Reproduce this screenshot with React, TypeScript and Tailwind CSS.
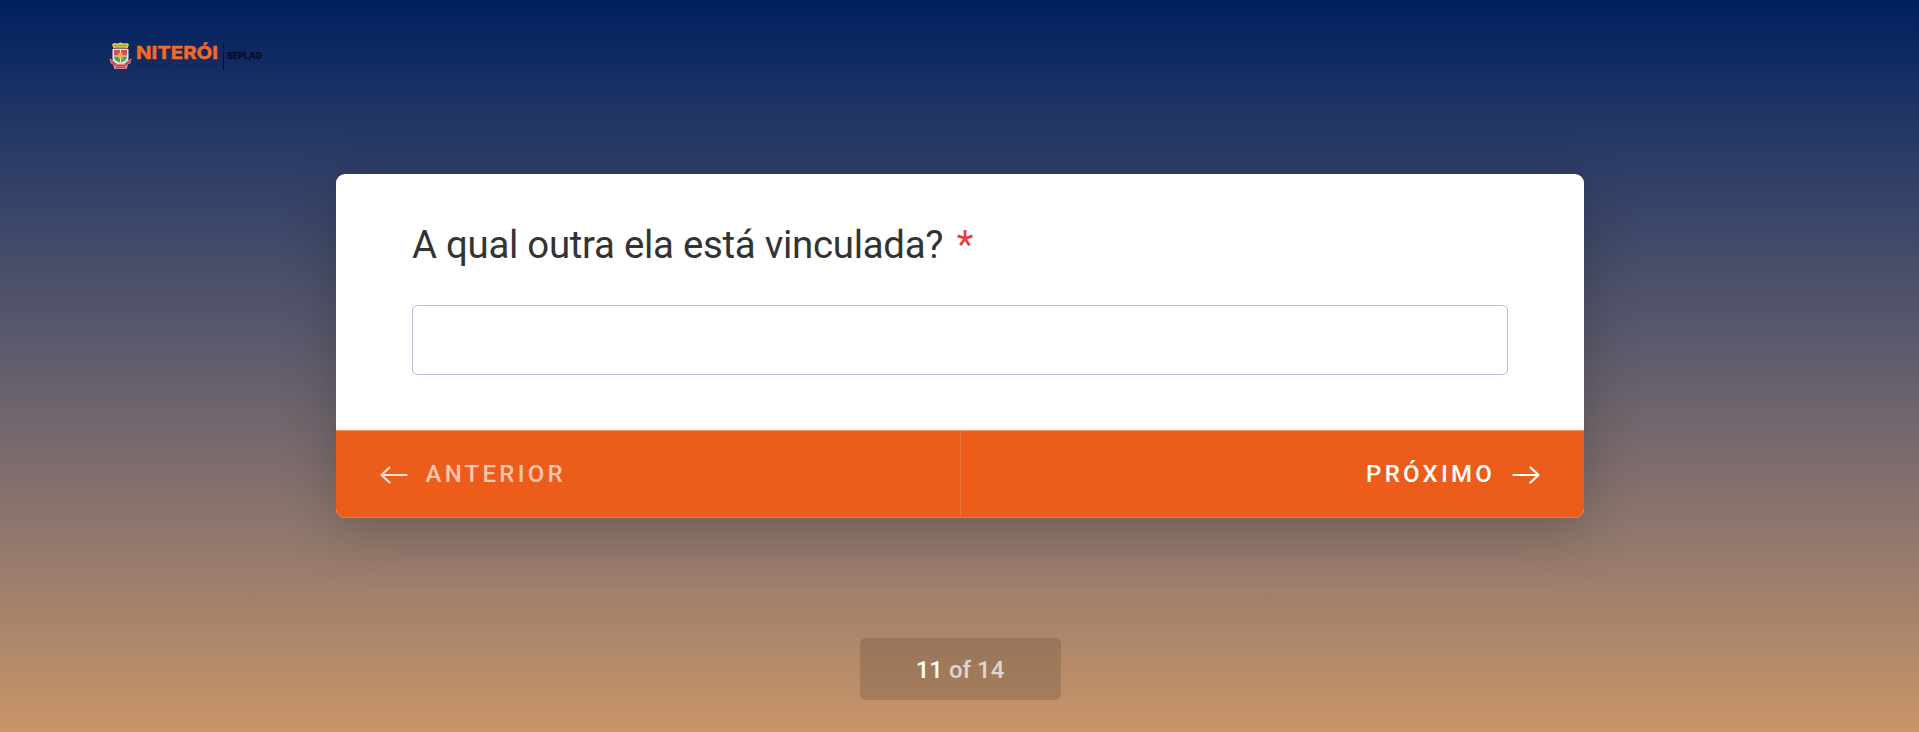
import React from "react";

function Crest() {
  return (
    <svg width="23" height="28" viewBox="0 0 23 28" className="shrink-0">
      <path d="M3 2.500L5 1L8 1.600L11.500 .5L15 1.600L18 1L20 2.500L18.500 6.500H4.500Z" fill="#e0c95f" />
      <path d="M4.500 3.500h14M6 5.300h11" stroke="#8d7830" strokeWidth=".7" />
      <path d="M3.500 7H19.500V16C19.500 20 15.500 22 11.500 23.500C7.500 22 3.500 20 3.500 16Z" fill="#ece6e4" />
      <path d="M5 8H11V13.500H5Z" fill="#e0484c" />
      <path d="M12 8H18V13.500H12Z" fill="#df4a4c" />
      <path d="M5 14.500H11V20.500C7.500 19.500 5 18 5 14.500Z" fill="#4aa544" />
      <path d="M12 14.500H18C18 18 15.500 19.500 12 20.500Z" fill="#58a84c" />
      <path d="M9.500 11H13.500V16.500H9.500Z" fill="#f0b352" />
      <path d="M.5 16.500L4 18.500L5.500 21.500H17.500L19 18.500L22.500 16.500L21.500 21L19 22.500L17.500 27H5.500L4 22.500L1.500 21Z" fill="#e29fa5" />
      <path d="M1.500 18.500L4.500 21.500L7 23.500H16L18.500 21.500L21.500 18.500M6.500 25.500H16.500" stroke="#cf3742" strokeWidth="1.500" fill="none" />
    </svg>
  );
}

function Logo() {
  return (
    <div className="flex h-7 items-center">
      <Crest />
      <svg width="132" height="30" viewBox="0 0 132 30" className="ml-1 shrink-0">
        <text x="0" y="18" textLength="82" lengthAdjust="spacingAndGlyphs" fill="#f26a25" stroke="#f26a25" strokeWidth=".5" className="font-['Inter',sans-serif] text-[18px] font-bold">NITERÓI</text>
        <text x="1" y="26.500" textLength="81" fill="#1c2748" className="font-['Inter',sans-serif] text-[6.800px] font-medium">SEMPRE À FRENTE</text>
        <path d="M87.500 1V29" stroke="#060d25" />
        <text x="91" y="18.300" textLength="35" lengthAdjust="spacingAndGlyphs" fill="#060d25" stroke="#060d25" strokeWidth=".3" className="font-['Inter',sans-serif] text-[9.200px] font-bold">SEPLAG</text>
      </svg>
    </div>
  );
}

function Arrow({ flip = false }: { flip?: boolean }) {
  return (
    <svg width="28" height="18" viewBox="0 0 28 18" fill="none" stroke="currentColor" strokeWidth="2.200" strokeLinecap="round" strokeLinejoin="round" className={flip ? "mt-px rotate-180" : "mt-px"}>
      <path d="M1.500 9H26.500M18.500 1.500L26.500 9L18.500 16.500" />
    </svg>
  );
}

export default function App() {
  return (
    <div className="flex h-[732px] w-full flex-col items-center overflow-hidden bg-linear-to-b from-[#001f5f] to-[#c99567] font-['Roboto',sans-serif]">
      <header className="h-[174px] w-full pt-[42px] pl-[109px]">
        <Logo />
      </header>
      <main className="flex h-[343.500px] w-[1248px] shrink-0 flex-col overflow-hidden rounded-[9px] bg-white shadow-[0_13px_56px_rgba(0,0,0,0.21)]">
        <div className="flex flex-1 flex-col px-[76px] pt-[48px]">
          <label htmlFor="answer" className="flex h-[46px] items-center text-[38.400px] leading-[46px] tracking-[-0.280px] whitespace-nowrap text-[#333333]">
            <span className="ml-[0.500px]">A qual outra ela está vinculada?</span>
            <span className="ml-[13.500px] text-[#e94040]">*</span>
          </label>
          <input id="answer" type="text" className="mt-[37px] h-[70px] w-full rounded-[5px] border border-[#b8bed6] bg-white px-4 text-2xl outline-none" />
        </div>
        <nav className="flex h-[87.500px] border-t border-b border-t-[#f4946a] border-b-[#cf8058] bg-[#ec5d1c] text-[24px] font-medium tracking-[3.250px] text-white">
          <button className="flex flex-1 items-center border-r border-[#f0743d] pt-px pl-[44.500px]">
            <span className="text-[#fde2d6]"><Arrow flip /></span>
            <span className="ml-[17.500px] text-[#fac6af]">ANTERIOR</span>
          </button>
          <button className="flex flex-1 items-center justify-end pt-px pr-[43.500px]">
            <span>PRÓXIMO</span>
            <span className="ml-[17px]"><Arrow /></span>
          </button>
        </nav>
      </main>
      <footer className="mt-[120.500px] ml-px flex h-[62px] w-[201px] shrink-0 items-center justify-center rounded-[6px] bg-black/13 pt-px text-[24px] font-medium text-white/70">
        <span className="text-white">11</span>
        <span className="ml-[6px]">of 14</span>
      </footer>
    </div>
  );
}
